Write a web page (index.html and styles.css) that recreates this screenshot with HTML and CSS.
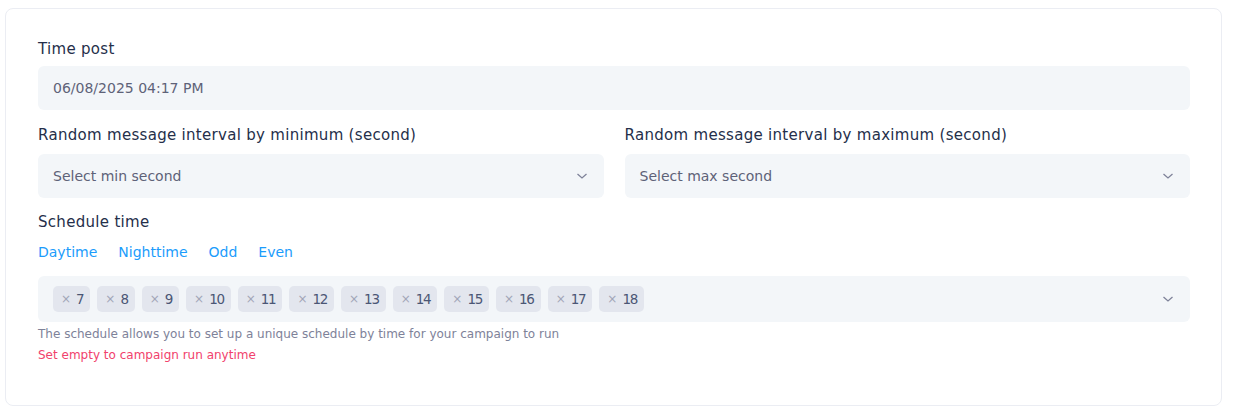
FILE: index.html
```html
<!DOCTYPE html>
<html>
<head>
<meta charset="utf-8">
<link rel="stylesheet" href="styles.css">
</head>
<body>
<div class="card">
  <div class="field">
    <div class="label">Time post</div>
    <div class="input">06/08/2025 04:17 PM</div>
  </div>
  <div class="row">
    <div class="field">
      <div class="label">Random message interval by minimum (second)</div>
      <div class="input select"><span>Select min second</span><svg class="chev" width="12" height="12" viewBox="0 0 12 12"><path d="M1.5 4 L6 8 L10.5 4" fill="none" stroke="#7e8299" stroke-width="1.3"/></svg></div>
    </div>
    <div class="field">
      <div class="label">Random message interval by maximum (second)</div>
      <div class="input select"><span>Select max second</span><svg class="chev" width="12" height="12" viewBox="0 0 12 12"><path d="M1.5 4 L6 8 L10.5 4" fill="none" stroke="#7e8299" stroke-width="1.3"/></svg></div>
    </div>
  </div>
  <div class="field">
    <div class="label sched">Schedule time</div>
    <div class="links"><a>Daytime</a><a>Nighttime</a><a>Odd</a><a>Even</a></div>
    <div class="tagbox">
      <div class="tags">
        <span class="tag"><i>×</i><b>7</b></span>
        <span class="tag"><i>×</i><b>8</b></span>
        <span class="tag"><i>×</i><b>9</b></span>
        <span class="tag"><i>×</i><b>10</b></span>
        <span class="tag"><i>×</i><b>11</b></span>
        <span class="tag"><i>×</i><b>12</b></span>
        <span class="tag"><i>×</i><b>13</b></span>
        <span class="tag"><i>×</i><b>14</b></span>
        <span class="tag"><i>×</i><b>15</b></span>
        <span class="tag"><i>×</i><b>16</b></span>
        <span class="tag"><i>×</i><b>17</b></span>
        <span class="tag"><i>×</i><b>18</b></span>
      </div>
      <svg class="chev" width="12" height="12" viewBox="0 0 12 12"><path d="M1.5 4 L6 8 L10.5 4" fill="none" stroke="#7e8299" stroke-width="1.3"/></svg>
    </div>
    <div class="help">The schedule allows you to set up a unique schedule by time for your campaign to run</div>
    <div class="warn">Set empty to campaign run anytime</div>
  </div>
</div>
</body>
</html>
```
FILE: styles.css
```css
* { box-sizing: border-box; }
body {
  margin: 0;
  background: #fff;
  font-family: "DejaVu Sans", sans-serif;
  color: #252f4a;
}
.card {
  margin: 8px 12px 0 5px;
  height: 398px;
  border: 1px solid #ebedf3;
  border-radius: 8px;
  padding: 30px 31px 0 32px;
}
.field { display: flex; flex-direction: column; }
.label {
  font-size: 15px;
  letter-spacing: 0.3px;
  line-height: 21px;
  color: #252f4a;
  margin-bottom: 6px;
}
.row .label { margin-top: 15px; margin-bottom: 8px; }
.label.sched { margin-top: 14px; margin-bottom: 8px; }
.input {
  height: 44px;
  background: #f3f6f9;
  border-radius: 6px;
  padding: 0 15px;
  display: flex;
  align-items: center;
  font-size: 14px;
  color: #5e6278;
}
.select { justify-content: space-between; padding-right: 16px; }
.row {
  display: grid;
  grid-template-columns: 1fr 1fr;
  column-gap: 21px;
}
.links {
  display: flex;
  gap: 21px;
  font-size: 14px;
  line-height: 21px;
  color: #1b9cfc;
  margin-top: 1px;
  margin-bottom: 13px;
}
.tagbox {
  height: 46px;
  background: #f3f6f9;
  border-radius: 6px;
  padding: 0 16px 0 15px;
  display: flex;
  align-items: center;
  justify-content: space-between;
}
.tags { display: flex; gap: 7px; }
.tag {
  height: 26px;
  background: #e3e6ee;
  border-radius: 5px;
  padding: 0 6px 0 8px;
  display: flex;
  align-items: center;
  color: #4b5675;
}
.tag i {
  font-style: normal;
  color: #a1a5b7;
  margin-right: 5px;
  font-size: 12px;
}
.tag b {
  font-weight: normal;
  font-size: 13.5px;
  letter-spacing: -1.3px;
  padding-right: 1px;
}
.help {
  font-size: 12px;
  color: #7e8299;
  margin-top: 3px;
  line-height: 18px;
}
.warn {
  font-size: 12px;
  color: #f1416c;
  margin-top: 3px;
  line-height: 18px;
}
```
